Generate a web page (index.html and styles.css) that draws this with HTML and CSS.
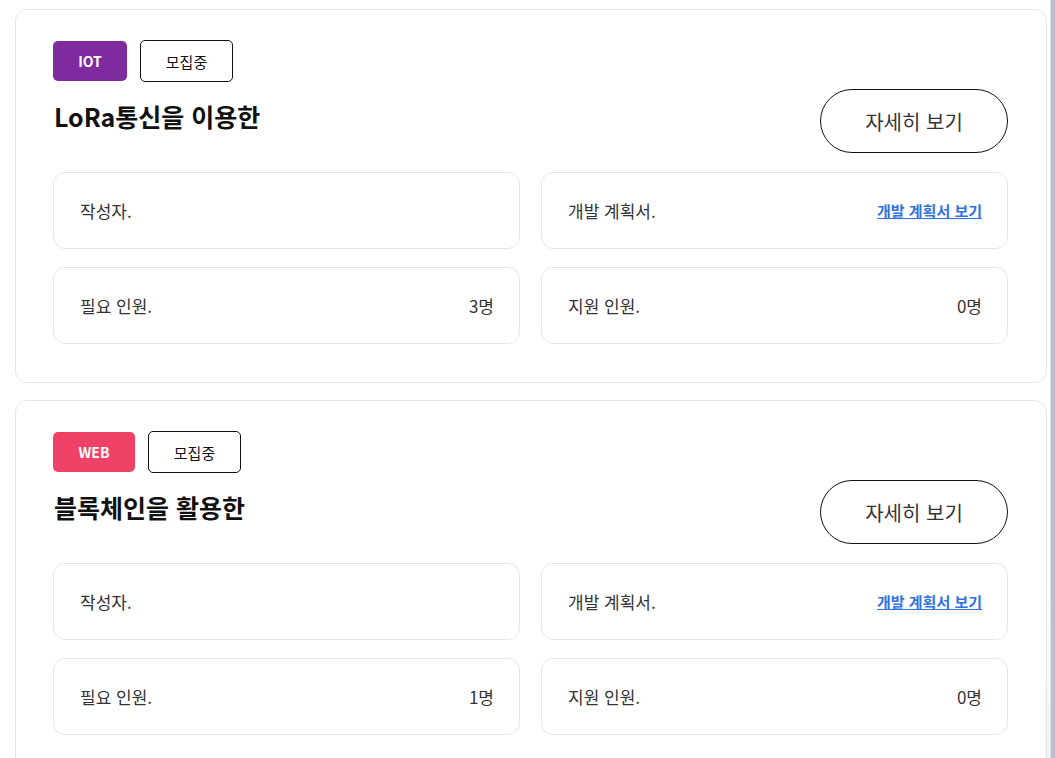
FILE: index.html
```html
<!DOCTYPE html>
<html lang="ko">
<head>
<meta charset="utf-8">
<title>프로젝트 목록</title>
<link rel="stylesheet" href="styles.css">
</head>
<body>
<div class="layout">
  <main class="list">
    <article class="card">
      <div class="tags">
        <span class="tag tag-iot">IOT</span>
        <span class="tag tag-status">모집중</span>
      </div>
      <div class="head">
        <h2 class="title">LoRa통신을 이용한</h2>
        <button class="detail-btn" type="button">자세히 보기</button>
      </div>
      <div class="info">
        <div class="info-box"><span>작성자.</span><span></span></div>
        <div class="info-box"><span>개발 계획서.</span><a class="plan-link" href="#">개발 계획서 보기</a></div>
        <div class="info-box"><span>필요 인원.</span><span>3명</span></div>
        <div class="info-box"><span>지원 인원.</span><span>0명</span></div>
      </div>
    </article>
    <article class="card">
      <div class="tags">
        <span class="tag tag-web">WEB</span>
        <span class="tag tag-status">모집중</span>
      </div>
      <div class="head">
        <h2 class="title">블록체인을 활용한</h2>
        <button class="detail-btn" type="button">자세히 보기</button>
      </div>
      <div class="info">
        <div class="info-box"><span>작성자.</span><span></span></div>
        <div class="info-box"><span>개발 계획서.</span><a class="plan-link" href="#">개발 계획서 보기</a></div>
        <div class="info-box"><span>필요 인원.</span><span>1명</span></div>
        <div class="info-box"><span>지원 인원.</span><span>0명</span></div>
      </div>
    </article>
  </main>
  <aside class="edge"></aside>
</div>
</body>
</html>
```

FILE: styles.css
```css
html, body {
  margin: 0;
  padding: 0;
  height: 100%;
  overflow: hidden;
  background: #ffffff;
}

body {
  font-family: "Noto Sans CJK KR", "Noto Sans", sans-serif;
  color: #222;
}

.layout {
  display: flex;
  height: 100%;
  background: radial-gradient(circle at 100% 100%, #f1f1f3 0, #ffffff 180px);
}

.list {
  flex: 1;
  padding: 9px 0 0 15px;
  display: flex;
  flex-direction: column;
  gap: 17px;
}

.edge {
  width: 4px;
  margin-left: 3px;
  border-left: 1px solid #dfe2e7;
  background: #b3c2d9;
  flex-shrink: 0;
}

.card {
  border: 1px solid #e6e6e6;
  border-radius: 12px;
  background: #fff;
  padding: 30px 38px 38px 37px;
}

.tags {
  display: flex;
  align-items: center;
  gap: 13px;
  height: 42px;
}

.tag {
  display: inline-flex;
  align-items: center;
  justify-content: center;
  box-sizing: border-box;
  font-size: 14px;
  padding: 0 20px;
  border-radius: 5px;
}

.tag-iot {
  background: #7f2ba0;
  color: #fff;
  font-weight: 700;
  height: 40px;
  width: 74px;
}

.tag-web {
  background: #ef4266;
  color: #fff;
  font-weight: 700;
  height: 40px;
  width: 82px;
}

.tag-status {
  border: 1px solid #111;
  height: 42px;
  width: 93px;
  color: #111;
  font-weight: 400;
  font-size: 15px;
}

.head {
  display: flex;
  justify-content: space-between;
  align-items: flex-start;
  margin-top: 7px;
}

.title {
  margin: 9px 0 0 1px;
  font-size: 25px;
  line-height: 36px;
  font-weight: 700;
  color: #111;
}

.detail-btn {
  width: 188px;
  height: 64px;
  border: 1px solid #111;
  border-radius: 32px;
  background: #fff;
  font-family: inherit;
  font-size: 20px;
  color: #333;
  cursor: pointer;
}

.info {
  display: grid;
  grid-template-columns: 1fr 1fr;
  column-gap: 21px;
  row-gap: 18px;
  margin-top: 19px;
}

.info-box {
  display: flex;
  justify-content: space-between;
  align-items: center;
  box-sizing: border-box;
  height: 77px;
  padding: 0 25px 0 26px;
  border: 1px solid #e6e6e6;
  border-radius: 12px;
  font-size: 17px;
  color: #333;
}

.plan-link {
  font-size: 15px;
  font-weight: 600;
  color: #2f72e0;
  text-decoration: underline;
}
```
